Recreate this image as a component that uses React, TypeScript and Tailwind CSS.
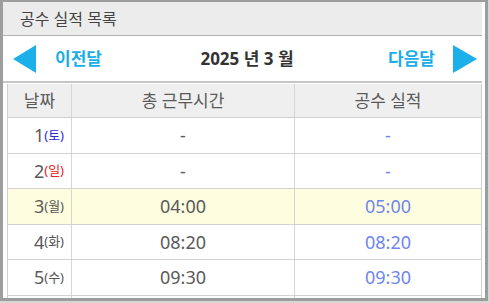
const rows = [
  { d: "1", w: "토", total: "-", work: "-", hl: false },
  { d: "2", w: "일", total: "-", work: "-", hl: false },
  { d: "3", w: "월", total: "04:00", work: "05:00", hl: true },
  { d: "4", w: "화", total: "08:20", work: "08:20", hl: false },
  { d: "5", w: "수", total: "09:30", work: "09:30", hl: false },
];

const heights = ["h-[35px]", "h-[34px]", "h-[35px]", "h-[34px]", "h-[35px]"];

function dayColor(w: string) {
  if (w === "토") return "text-[#2b2bd9]";
  if (w === "일") return "text-[#e8202a]";
  return "text-[#555]";
}

export default function App() {
  return (
    <div
      className="w-[490px] h-[303px] bg-[#d6d6d6] overflow-hidden"
      style={{ fontFamily: '"Noto Sans", "Noto Sans CJK KR", sans-serif' }}
    >
      <div className="w-[488px] h-[301px] border-l-[3px] border-t-2 border-r-[3px] border-b-[3px] border-[#9d9d9d] bg-white overflow-hidden">
        <div className="pr-[3px] flex flex-col">
          <div className="h-[34px] bg-[#ececec] border-b border-[#b4b4b4] flex items-center pl-[17px] text-[16px] text-[#444]">
            공수 실적 목록
          </div>
          <div className="h-[47px] border-b-2 border-[#c6c6c6] flex items-center pl-[10px] pr-[5px]">
            <svg width="23" height="28" viewBox="0 0 23 28">
              <polygon points="23,0 0,14 23,28" fill="#1bb0ea" />
            </svg>
            <span className="ml-[19px] text-[17px] font-bold text-[#1aaee8]">이전달</span>
            <span className="flex-1 text-center text-[17px] font-bold text-[#333] pl-[4px]">
              2025 년 3 월
            </span>
            <span className="mr-[18px] text-[17px] font-bold text-[#1aaee8]">다음달</span>
            <svg width="24" height="28" viewBox="0 0 24 28">
              <polygon points="0,0 24,14 0,28" fill="#1bb0ea" />
            </svg>
          </div>
          <div className="ml-[4px] mt-[1px] border-l border-r border-[#cfcfcf] w-[475px]">
            <div className="h-[34px] grid grid-cols-[64px_223px_1fr] bg-[#efefef] text-[17px] text-[#5a5a5a] border-b border-[#cfcfcf]">
              <div className="flex items-center justify-center border-r border-[#d6d6d6]">날짜</div>
              <div className="flex items-center justify-center border-r border-[#d6d6d6]">총 근무시간</div>
              <div className="flex items-center justify-center">공수 실적</div>
            </div>
            {rows.map((r, i) => (
              <div
                key={r.d}
                className={`${heights[i]} box-content grid grid-cols-[64px_223px_1fr] border-b border-[#d2d2d2] ${r.hl ? "bg-[#fefde0]" : "bg-white"}`}
              >
                <div className="flex items-center justify-end pr-[7px] border-r border-[#d6d6d6] text-[#5a5a5a]">
                  <span className="text-[18px]">{r.d}</span>
                  <span className={`text-[13px] ${dayColor(r.w)}`}>({r.w})</span>
                </div>
                <div className="flex items-center justify-center border-r border-[#d6d6d6] text-[18px] text-[#5a5a5a]">
                  {r.total}
                </div>
                <div className="flex items-center justify-center text-[18px] text-[#6f86ee]">{r.work}</div>
              </div>
            ))}
            <div className="h-[20px] grid grid-cols-[64px_223px_1fr]">
              <div className="border-r border-[#d6d6d6]" />
              <div className="border-r border-[#d6d6d6]" />
              <div />
            </div>
          </div>
        </div>
      </div>
    </div>
  );
}
